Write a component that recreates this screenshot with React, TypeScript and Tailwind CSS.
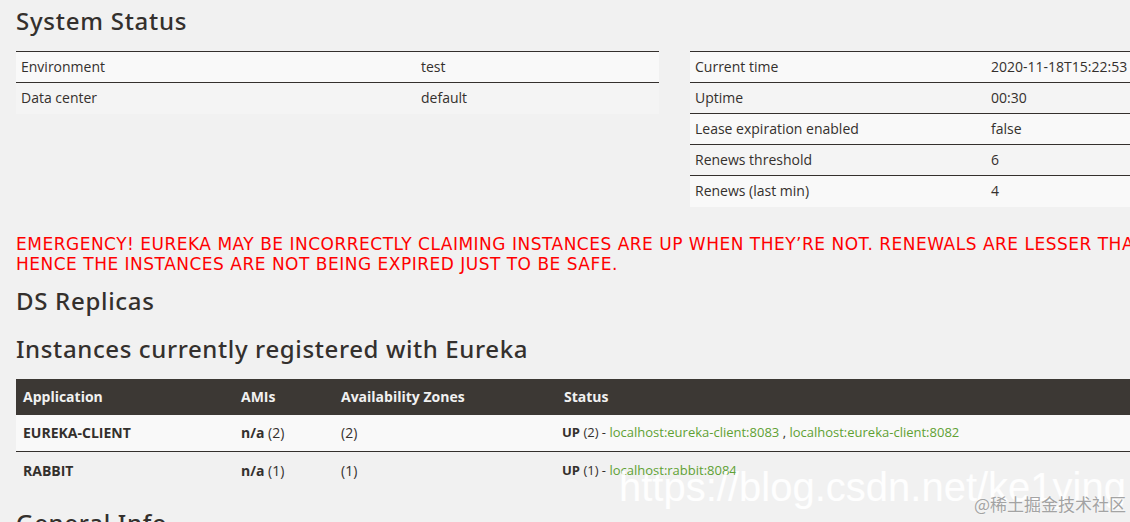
import React from "react";

const body = { fontFamily: '"Open Sans", "Noto Sans", sans-serif' };
const head = { fontFamily: '"Noto Sans", "Open Sans", sans-serif' };

function KV({ rows, labelW }: { rows: [string, string][]; labelW: string }) {
  return (
    <table className="w-[643px] border-collapse text-[14px] text-[#34302d]" style={body}>
      <tbody>
        {rows.map(([k, v], i) => (
          <tr key={k} className={`border-t border-[#34302d] ${i % 2 === 0 ? "bg-[#f9f9f9]" : "bg-[#f4f4f4]"}`}>
            <td className={`${labelW} px-[5px] h-[31px] leading-5`}>{k}</td>
            <td className="px-[5px] h-[31px] leading-5 whitespace-nowrap">{v}</td>
          </tr>
        ))}
      </tbody>
    </table>
  );
}

export default function App() {
  return (
    <div className="w-[1130px] h-[522px] overflow-hidden bg-[#f1f1f1] relative">
      <div className="w-[1360px] pl-4 text-[#34302d]" style={body}>
        <h1 className="text-[24px] font-medium leading-none tracking-[0.75px] pt-[9px] pb-[18px]" style={head}>
          System Status
        </h1>
        <div className="flex gap-[31px] items-start">
          <KV labelW="w-[400px]" rows={[["Environment", "test"], ["Data center", "default"]]} />
          <KV
            labelW="w-[296px]"
            rows={[
              ["Current time", "2020-11-18T15:22:53 +0800"],
              ["Uptime", "00:30"],
              ["Lease expiration enabled", "false"],
              ["Renews threshold", "6"],
              ["Renews (last min)", "4"],
            ]}
          />
        </div>
        <p
          className="mt-[27px] text-[17px] leading-5 tracking-[0.5px] text-[#ff0000] whitespace-nowrap"
          style={{ fontFamily: '"DejaVu Sans", "Open Sans", sans-serif' }}
        >
          EMERGENCY! EUREKA MAY BE INCORRECTLY CLAIMING INSTANCES ARE UP WHEN THEY’RE NOT. RENEWALS ARE LESSER THAN THRESHOLD AND
          <br />
          HENCE THE INSTANCES ARE NOT BEING EXPIRED JUST TO BE SAFE.
        </p>
        <h2 className="text-[24px] font-medium leading-none tracking-[0.7px] mt-[15px]" style={head}>
          DS Replicas
        </h2>
        <h2 className="text-[24px] font-medium leading-none tracking-[0.62px] mt-[24px]" style={head}>
          Instances currently registered with Eureka
        </h2>
        <table className="mt-[18px] w-[1344px] border-collapse text-[14px]">
          <thead>
            <tr className="bg-[#3c3834] text-[#f1f1f1] font-bold">
              <th className="w-[217px] text-left px-[7px] h-[36px]">Application</th>
              <th className="w-[100px] text-left px-[8px]">AMIs</th>
              <th className="w-[223px] text-left px-[8px]">Availability Zones</th>
              <th className="text-left px-[8px]">Status</th>
            </tr>
          </thead>
          <tbody>
            <tr className="bg-[#f9f9f9]">
              <td className="px-[7px] h-[37px] font-bold">EUREKA-CLIENT</td>
              <td className="px-[8px]"><b>n/a</b> (2)</td>
              <td className="px-[8px]">(2)</td>
              <td className="px-[6px] text-[13px]">
                <b>UP</b> (2) - <span className="text-[#5fa134]">localhost:eureka-client:8083</span> ,{" "}
                <span className="text-[#5fa134]">localhost:eureka-client:8082</span>
              </td>
            </tr>
            <tr className="border-t border-[#34302d]">
              <td className="px-[7px] h-[37px] font-bold">RABBIT</td>
              <td className="px-[8px]"><b>n/a</b> (1)</td>
              <td className="px-[8px]">(1)</td>
              <td className="px-[6px] text-[13px]">
                <b>UP</b> (1) - <span className="text-[#5fa134]">localhost:rabbit:8084</span>
              </td>
            </tr>
          </tbody>
        </table>
        <h2 className="text-[24px] font-medium leading-none tracking-[0.7px] mt-[22px]" style={head}>
          General Info
        </h2>
      </div>
      <div
        className="absolute left-[619px] top-[467px] text-[40px] leading-none text-white/90 whitespace-nowrap"
        style={{ fontFamily: '"Liberation Sans", Arial, sans-serif' }}
      >
        https://blog.csdn.net/ke1ying
      </div>
      <div
        className="absolute left-[974px] top-[495px] text-[17px] leading-none text-[#a3a3a3] whitespace-nowrap"
        style={{ fontFamily: '"Noto Sans CJK SC", sans-serif', textShadow: "0 0 2px #fff" }}
      >
        @稀土掘金技术社区
      </div>
    </div>
  );
}
